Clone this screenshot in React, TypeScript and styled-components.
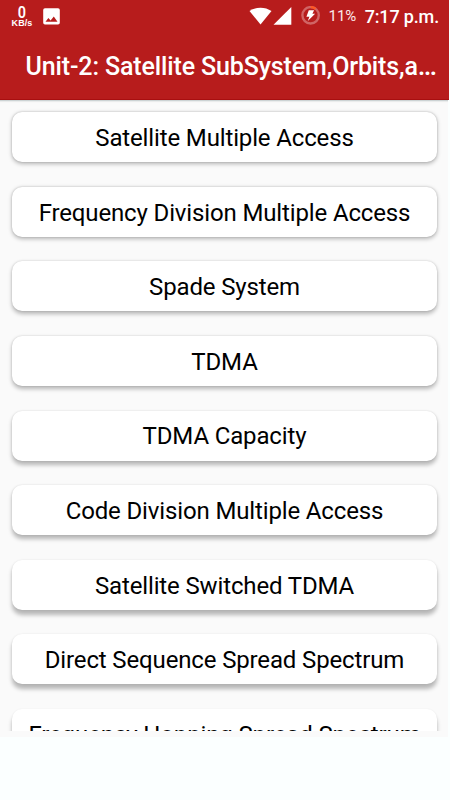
import React from "react";
import styled, { createGlobalStyle } from "styled-components";

const GlobalStyle = createGlobalStyle`
  * { box-sizing: border-box; }
  body { margin: 0; background: #fff; font-family: Roboto, "Liberation Sans", sans-serif; }
`;

const Screen = styled.div`
  width: 450px;
  height: 800px;
  display: flex;
  flex-direction: column;
  overflow: hidden;
  background: #fbffff;
`;

const Header = styled.header`
  flex: none;
  width: 449px;
  height: 100px;
  background: #b71c1c;
  color: #fff;
  border-bottom: 1px solid #a80f10;
`;

const StatusBar = styled.div`
  height: 32px;
  display: flex;
  align-items: center;
  padding: 0 10px 0 11px;
`;

const Speed = styled.div`
  width: 22px;
  display: flex;
  flex-direction: column;
  align-items: center;
  margin-right: 10px;
  padding-bottom: 1px;
  white-space: nowrap;
`;

const SpeedValue = styled.span`
  font-size: 17px;
  line-height: 14px;
  font-weight: 600;
  transform: scaleX(0.85);
`;

const SpeedUnit = styled.span`
  font-family: "Liberation Sans", sans-serif;
  font-size: 9px;
  line-height: 8px;
  font-weight: 700;
  letter-spacing: 0.1px;
`;

const StatusIcon = styled.svg<{ $gap?: number }>`
  display: block;
  flex: none;
  margin-right: ${(p) => p.$gap ?? 0}px;
`;

const Spacer = styled.div`
  flex: 1;
`;

const Battery = styled.span`
  font-size: 15px;
  line-height: 32px;
  margin-right: 8.5px;
  letter-spacing: -0.1px;
  color: #fbe9e9;
`;

const Clock = styled.span`
  font-size: 18px;
  line-height: 31px;
  font-weight: 500;
  letter-spacing: -0.15px;
  white-space: nowrap;
`;

const Title = styled.h1`
  margin: 0;
  padding: 0 0 0 25.5px;
  height: 67px;
  line-height: 68px;
  font-size: 25px;
  font-weight: 500;
  letter-spacing: -0.13px;
  white-space: nowrap;
`;

const Ellipsis = styled.span`
  letter-spacing: 0;
  font-size: 27px;
`;

const List = styled.main`
  flex: none;
  width: 448px;
  height: 637px;
  background: #fafafa;
  border-top: 1px solid #ccd3d4;
  padding-bottom: 6px;
`;

const Viewport = styled.div`
  height: 630px;
  overflow: hidden;
  padding: 11.3px 11px 0 12px;
  display: flex;
  flex-direction: column;
  gap: 24.6px;
  box-shadow: inset 0 2px 1px -1px #e8eaea;
`;

const Card = styled.button<{ $depth: number }>`
  flex: none;
  width: 425px;
  height: 50px;
  padding: 2.8px 0 0;
  border: 0;
  border-radius: 10px;
  background: #fff;
  color: #000;
  font-family: inherit;
  font-size: 24px;
  letter-spacing: -0.14px;
  line-height: 47.2px;
  white-space: nowrap;
  box-shadow:
    0 ${(p) => 1.2 + p.$depth * 0.5}px 4px rgba(0, 0, 0, 0.27),
    0 0 2px rgba(0, 0, 0, ${(p) => 0.18 - p.$depth * 0.015});
`;

const topics = [
  "Satellite Multiple Access",
  "Frequency Division Multiple Access",
  "Spade System",
  "TDMA",
  "TDMA Capacity",
  "Code Division Multiple Access",
  "Satellite Switched TDMA",
  "Direct Sequence Spread Spectrum",
  "Frequency Hopping Spread Spectrum",
];

export default function App() {
  return (
    <>
      <GlobalStyle />
      <Screen>
        <Header>
          <StatusBar>
            <Speed>
              <SpeedValue>0</SpeedValue>
              <SpeedUnit>KB/s</SpeedUnit>
            </Speed>
            <StatusIcon width="17" height="17" viewBox="0 0 17 17">
              <path
                fill="#fff"
                fillRule="evenodd"
                d="M2 .2h13A1.8 1.8 0 0 1 16.8 2v12.7a1.8 1.8 0 0 1-1.8 1.8H2A1.8 1.8 0 0 1 .2 14.7V2A1.8 1.8 0 0 1 2 .2ZM2.5 13.7h12L10.8 8.6 7.6 12.5 5.4 9.9Z"
              />
            </StatusIcon>
            <Spacer />
            <StatusIcon width="23" height="19" viewBox="0 0 23 19" $gap={1}>
              <path fill="#fff" d="M.5 4C6.8-.5 16.2-.5 22.5 4L11.5 17.6Z" />
            </StatusIcon>
            <StatusIcon width="19" height="19" viewBox="0 0 19 19" $gap={9}>
              <path fill="#fff" d="M18.3 0V17.7H.5Z" />
            </StatusIcon>
            <StatusIcon width="20" height="20" viewBox="0 0 20 20" $gap={7.5}>
              <circle cx="9.6" cy="9.3" r="8.2" fill="none" stroke="#d06565" strokeWidth="2.4" />
              <path d="M9.6 1.1A8.2 8.2 0 0 1 14.6 2.8" fill="none" stroke="#ff5722" strokeWidth="2.4" />
              <path fill="#fff" d="M7.8 4.3h5.3L11.4 7.7H14.1L6.8 15 8.4 10.7H5.4Z" />
            </StatusIcon>
            <Battery>11%</Battery>
            <Clock>7:17 p.m.</Clock>
          </StatusBar>
          <Title>
            Unit-2: Satellite SubSystem,Orbits,a<Ellipsis>…</Ellipsis>
          </Title>
        </Header>
        <List>
          <Viewport>
            {topics.map((topic, i) => (
              <Card key={topic} $depth={i}>
                {topic}
              </Card>
            ))}
          </Viewport>
        </List>
      </Screen>
    </>
  );
}
